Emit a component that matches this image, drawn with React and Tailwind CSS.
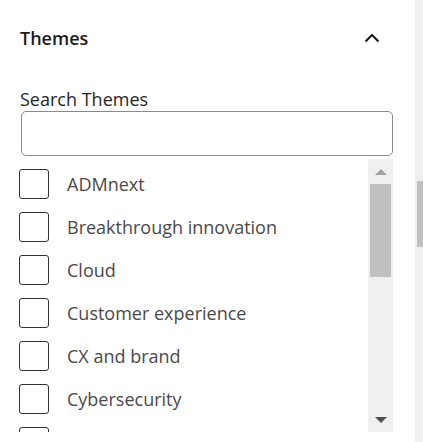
import React from 'react';

const themes = [
    'ADMnext',
    'Breakthrough innovation',
    'Cloud',
    'Customer experience',
    'CX and brand',
    'Cybersecurity',
];

function ThemeRow({ label }) {
    return (
        <label className="flex items-center h-[43px] shrink-0 gap-[18px]">
            <span className="w-[30px] h-[30px] border border-[#333] rounded-[3px] bg-white shrink-0" />
            {label && <span className="text-[18px] text-[#4a4a4a] pt-[2px]">{label}</span>}
        </label>
    );
}

export default function App() {
    return (
        <div className="flex w-[423px] h-[442px] bg-white overflow-hidden" style={{ fontFamily: '"Open Sans", sans-serif' }}>
            <div className="flex-1 pl-[20px] pr-[22px]">
                {/* Header */}
                <div className="flex items-center justify-between pt-[24px] h-[52px]">
                    <h2 className="text-[18px] font-semibold text-[#1b1b1b] leading-[24px] -mt-[1px]">Themes</h2>
                    <svg width="16" height="10" viewBox="0 0 16 10" className="mr-[13px]">
                        <path d="M1.5 8.5 L8 2 L14.5 8.5" fill="none" stroke="#1b1b1b" strokeWidth="2" />
                    </svg>
                </div>

                <div className="mt-[35px] text-[18px] text-[#262626] leading-[24px]">Search Themes</div>
                <input
                    type="text"
                    className="block w-[372px] h-[45px] ml-[1px] border border-[#8a8a8a] rounded-[5px] px-3 outline-none"
                />

                {/* List */}
                <div className="flex mt-[3px] h-[273px]">
                    <div className="flex-1 flex flex-col overflow-hidden pt-[3px] -ml-[1px]">
                        {themes.map((t) => (
                            <ThemeRow key={t} label={t} />
                        ))}
                        <ThemeRow label="" />
                    </div>
                    <div className="w-[25px] bg-[#f0f0f0] flex flex-col items-center">
                        <div className="h-[25px] flex items-center justify-center">
                            <span className="block w-0 h-0 border-x-[6px] border-x-transparent border-b-[6px] border-b-[#a3a3a3]" />
                        </div>
                        <div className="w-[21px] h-[93px] bg-[#c0c0c0]" />
                        <div className="flex-1" />
                        <div className="h-[25px] flex items-center justify-center">
                            <span className="block w-0 h-0 border-x-[6px] border-x-transparent border-t-[6px] border-t-[#505050]" />
                        </div>
                    </div>
                </div>
            </div>

            {/* Page scrollbar */}
            <div className="w-[8px] bg-[#f0f0f0] flex flex-col items-end">
                <div className="mt-[181px] w-[6px] h-[66px] bg-[#c1c1c1]" />
            </div>
        </div>
    );
}
